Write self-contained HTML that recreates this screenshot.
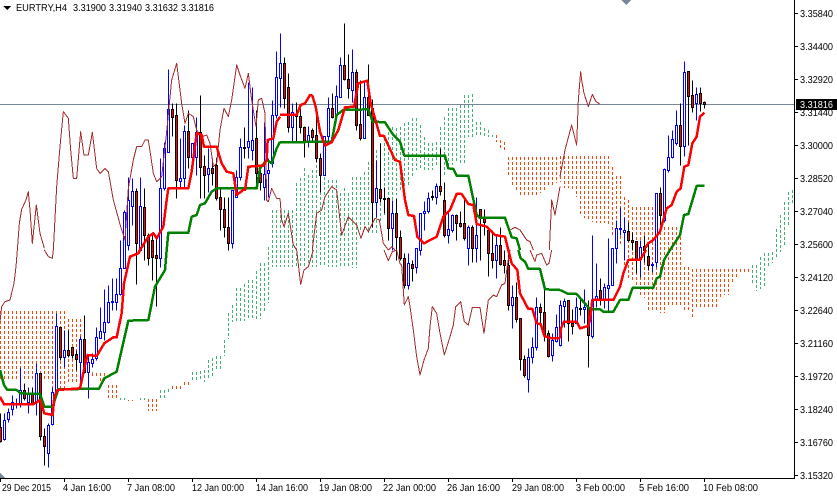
<!DOCTYPE html>
<html><head><meta charset="utf-8"><style>
html,body{margin:0;padding:0;background:#fff}
svg{display:block;width:837px;height:497px;font-family:"Liberation Sans",sans-serif;font-size:10px}
</style></head><body>
<svg width="837" height="497" viewBox="0 0 837 497" xmlns="http://www.w3.org/2000/svg" shape-rendering="crispEdges">
<rect width="837" height="497" fill="#fff"/>
<g transform="translate(.5,0)" fill="none" stroke-width="1" stroke-dasharray="3 2">
<path stroke="#ff4500" d="M0 311V381M4 311V381M8 311V381M12 311V381M16 311V381M20 311V381M24 311V381M28 311V381M32 311V381M36 311V381M40 311V381M44 311V381M48 311V381M52 311V390M56 311V390M60 311V390M64 311V390M68 319V383M72 319V383M76 319V383M80 319V383M92 373V378M96 373V378M100 373V382M104 373V382M108 385V398M112 385V398M116 385V398M128 400V401M132 400V401M148 399V411M152 399V411M156 399V411M172 386V390M176 386V390M180 386V390M184 382V385M188 382V385M496 135V142M500 140V148M504 142V150M508 157V177M512 157V185M516 157V190M520 157V197M524 157V197M528 157V197M532 157V197M536 157V197M540 157V193M544 157V190M548 157V186M552 157V186M556 157V183M560 156V182M564 156V188M568 156V188M572 156V190M576 156V197M580 156V215M584 156V218M588 156V219M592 156V222M596 156V223M600 156V223M604 156V223M608 156V224M612 167V235M616 176V240M620 176V245M624 197V270M628 200V280M632 207V282M636 207V285M640 207V297M644 207V298M648 207V311M652 207V312M656 207V312M660 227V313M664 227V313M668 227V307M672 227V307M676 227V307M680 227V307M684 267V312M688 267V312M692 269V318M696 269V307M700 269V307M704 269V307M708 269V307M712 269V307M716 269V307M720 269V297M724 269V295M728 269V295M732 269V283M736 269V278M740 269V272M744 269V272M748 269V272"/>
<path stroke="#3cb371" d="M92 372V373M120 398V400M124 398V400M140 398V400M144 398V400M160 390V398M164 390V398M168 389V392M192 372V382M196 372V381M200 371V381M204 370V382M208 360V378M212 358V377M216 356V370M220 356V369M224 340V356M228 313V339M232 305V322M236 288V321M240 288V321M244 284V321M248 280V319M252 280V319M256 271V321M260 263V319M264 263V312M268 247V303M272 210V267M276 210V267M280 210V267M284 210V267M288 210V267M292 210V267M296 183V267M300 178V267M304 168V267M308 175V267M312 170V267M316 165V267M320 177V267M324 177V267M328 180V267M332 180V267M336 180V267M340 193V267M344 188V267M348 193V267M352 177V268M356 177V268M360 177V230M364 172V230M368 162V233M372 145V233M376 150V233M380 143V222M384 138V215M388 132V200M392 127V200M396 128V195M400 127V192M404 123V187M408 122V187M412 118V177M416 118V170M420 125V170M424 137V170M428 143V170M432 143V170M436 142V165M440 127V175M444 117V175M448 108V167M452 108V165M456 108V163M460 105V163M464 95V163M468 95V137M472 94V137M476 122V137M480 122V137M484 128V137M488 130V137M492 135V137M752 265V285M756 265V291M760 257V289M764 253V287M768 253V268M772 252V263M776 229V259M780 215V252M784 202V245M788 192V227M792 190V205"/>
</g>
<line x1="0" y1="104.5" x2="794" y2="104.5" stroke="#778899"/>
<g transform="translate(.5,.5)" fill="none" stroke-width="1">
<path stroke="#000" d="M0 413V442M24 383V400M32 387V404M40 373V440M44 428V465M60 327V360M68 330V357M72 347V358M76 350V370M84 315V373M136 188V284M144 188V260M148 233V265M152 233V280M156 238V306M172 103V136M176 103V198M188 110V168M200 95V198M204 155V198M212 158V185M216 157V200M220 188V230M224 197V237M228 197V250M244 127V158M256 110V183M260 168V190M284 57V108M288 73V132M296 102V142M300 108V133M304 126V157M312 128V142M316 115V162M320 153V192M332 93V118M344 23V80M348 54V98M356 69V130M360 80V140M368 64V115M372 99V227M380 143V202M384 187V213M388 198V240M396 198V260M400 230V260M404 253V288M412 260V281M432 190V200M440 148V195M444 182V237M456 214V240M460 211V227M464 198V240M472 225V262M480 209V260M484 209V235M488 230V276M492 230V268M500 227V265M504 250V273M508 250V310M516 282V322M520 318V370M524 355V377M540 303V322M544 282V341M548 330V357M568 300V341M572 309V334M580 297V315M588 300V367M600 278V305M628 222V241M632 232V250M636 241V273M644 235V262M648 242V270M660 187V225M680 103V165M688 71V145M692 80V112M700 87V111M704 101V108"/>
<path stroke="#0000ff" d="M4 413V440M8 408V422M12 395V415M16 398V408M20 367V407M28 387V413M36 363V415M48 423V467M52 387V425M56 313V393M64 330V367M80 336V380M88 355V398M92 353V367M96 327V360M100 307V338M104 289V340M108 285V323M112 278V310M116 278V310M120 240V295M124 210V268M128 177V250M132 178V225M140 177V250M160 158V267M164 142V190M168 69V152M180 138V188M184 125V188M192 143V168M196 117V175M208 148V192M232 190V248M236 170V197M240 138V180M248 82V158M252 87V160M264 122V200M268 158V197M272 100V167M276 51V118M280 33V107M292 103V142M308 126V147M324 136V175M328 97V142M336 85V115M340 57V97M352 49V102M364 80V138M376 160V217M392 200V250M408 253V289M416 248V273M420 213V255M424 201V230M428 192V213M436 183V204M448 212V243M452 214V232M468 225V265M476 197V262M496 235V278M512 285V328M528 348V392M532 337V363M536 297V350M552 333V361M556 314V342M560 300V346M564 298V327M576 297V323M584 289V323M592 235V338M596 263V307M604 283V308M608 238V312M612 248V285M616 220V263M620 207V235M624 217V260M640 240V277M652 262V272M656 193V267M664 168V222M668 135V172M672 130V158M676 110V145M684 61V156M696 87V120"/>
<path stroke="#0000ff" fill="#fff" d="M3 420h2V439h-2zM7 412h2V419h-2zM11 402h2V409h-2zM15 403h2V404h-2zM19 390h2V403h-2zM27 393h2V402h-2zM35 373h2V402h-2zM47 425h2V453h-2zM51 392h2V424h-2zM55 326h2V392h-2zM63 350h2V357h-2zM79 339h2V362h-2zM87 362h2V372h-2zM91 359h2V363h-2zM95 337h2V358h-2zM99 331h2V338h-2zM103 322h2V332h-2zM107 302h2V322h-2zM111 301h2V302h-2zM115 294h2V302h-2zM119 268h2V294h-2zM123 212h2V268h-2zM127 200h2V245h-2zM131 191h2V206h-2zM139 206h2V250h-2zM159 188h2V258h-2zM163 148h2V188h-2zM167 109h2V152h-2zM179 178h2V181h-2zM183 131h2V178h-2zM191 143h2V157h-2zM195 132h2V157h-2zM207 168h2V174h-2zM231 190h2V243h-2zM235 177h2V197h-2zM239 147h2V177h-2zM247 141h2V147h-2zM251 140h2V150h-2zM263 174h2V187h-2zM267 170h2V173h-2zM271 115h2V163h-2zM275 77h2V115h-2zM279 63h2V78h-2zM291 112h2V127h-2zM307 135h2V142h-2zM323 136h2V175h-2zM327 108h2V136h-2zM335 96h2V115h-2zM339 65h2V97h-2zM351 72h2V90h-2zM363 97h2V138h-2zM375 188h2V202h-2zM391 213h2V228h-2zM407 263h2V285h-2zM415 248h2V267h-2zM419 213h2V250h-2zM423 211h2V213h-2zM427 198h2V211h-2zM435 186h2V197h-2zM447 229h2V235h-2zM451 215h2V230h-2zM467 227h2V248h-2zM475 235h2V248h-2zM495 245h2V260h-2zM511 297h2V305h-2zM527 357h2V379h-2zM531 347h2V357h-2zM535 307h2V347h-2zM551 340h2V355h-2zM555 327h2V341h-2zM559 305h2V345h-2zM563 301h2V306h-2zM575 307h2V323h-2zM583 307h2V309h-2zM591 300h2V336h-2zM595 296h2V300h-2zM603 287h2V300h-2zM607 285h2V288h-2zM611 248h2V285h-2zM615 228h2V248h-2zM619 228h2V229h-2zM623 230h2V232h-2zM639 247h2V259h-2zM651 264h2V265h-2zM655 193h2V262h-2zM663 169h2V220h-2zM667 157h2V170h-2zM671 139h2V157h-2zM675 125h2V143h-2zM683 72h2V146h-2zM695 94h2V103h-2z"/>
<path stroke="#000" fill="#ff0000" d="M-1 427h2V441h-2zM23 390h2V398h-2zM31 394h2V403h-2zM39 373h2V436h-2zM43 436h2V446h-2zM59 327h2V357h-2zM67 350h2V355h-2zM71 347h2V355h-2zM75 354h2V359h-2zM83 339h2V372h-2zM135 191h2V243h-2zM143 207h2V235h-2zM147 235h2V258h-2zM151 240h2V257h-2zM155 255h2V258h-2zM171 109h2V117h-2zM175 115h2V180h-2zM187 131h2V157h-2zM199 132h2V167h-2zM203 166h2V175h-2zM211 168h2V173h-2zM215 165h2V198h-2zM219 197h2V209h-2zM223 209h2V227h-2zM227 227h2V243h-2zM243 147h2V148h-2zM255 138h2V173h-2zM259 173h2V182h-2zM283 63h2V98h-2zM287 87h2V127h-2zM295 114h2V116h-2zM299 116h2V127h-2zM303 127h2V142h-2zM311 130h2V137h-2zM315 135h2V158h-2zM319 158h2V175h-2zM331 108h2V117h-2zM343 65h2V79h-2zM347 79h2V88h-2zM355 72h2V125h-2zM359 124h2V138h-2zM367 97h2V115h-2zM371 108h2V202h-2zM379 189h2V198h-2zM383 198h2V199h-2zM387 198h2V228h-2zM395 213h2V237h-2zM399 237h2V258h-2zM403 258h2V285h-2zM411 264h2V268h-2zM431 196h2V197h-2zM439 186h2V191h-2zM443 200h2V235h-2zM455 215h2V223h-2zM459 223h2V226h-2zM463 223h2V238h-2zM471 227h2V248h-2zM479 209h2V218h-2zM483 218h2V222h-2zM487 230h2V253h-2zM491 253h2V260h-2zM499 245h2V264h-2zM503 260h2V265h-2zM507 265h2V305h-2zM515 297h2V319h-2zM519 318h2V359h-2zM523 359h2V375h-2zM539 307h2V312h-2zM543 312h2V335h-2zM547 333h2V356h-2zM567 300h2V323h-2zM571 323h2V326h-2zM579 308h2V309h-2zM587 308h2V335h-2zM599 290h2V298h-2zM627 231h2V240h-2zM631 240h2V242h-2zM635 241h2V260h-2zM643 246h2V250h-2zM647 256h2V265h-2zM659 193h2V215h-2zM679 125h2V146h-2zM687 71h2V96h-2zM691 95h2V107h-2zM699 93h2V103h-2zM703 102h2V104h-2z"/>
</g>
<g fill="none" stroke-linejoin="round">
<g stroke="#a52a2a" stroke-width="3">
<g transform="translate(0,250) scale(.33333)"><polyline points="0,215 5,170 15,155 30,150 42,100 48,50 52,0"/><polyline points="133,0 145,20 157,25 160,0"/></g>
<g transform="scale(.33333)"><polyline points="52,750 58,670 65,628 78,600 85,575 90,630 97,730 109,615 120,700 133,745"/><polyline points="160,750 170,560 180,440 190,335 205,355 212,450 220,535 230,535 242,395 252,465 265,465 277,397 290,505 300,520 315,505 325,515 340,600 362,680 375,720 385,565 400,480 410,440 425,440 435,420 445,420 460,520 470,545 485,530 500,395 515,240 530,190 545,310 555,370 565,340 580,350 590,390 605,410 620,405 630,430 640,500 650,490 660,390 672,325 685,350 695,300 710,195 720,225 735,265 745,220 755,300 768,380 775,300 785,295 795,340 800,600 805,605 815,565 830,595 840,595"/></g>
<g transform="translate(280,0) scale(.33333)"><polyline points="0,595 5,660 12,680 25,640 40,735 50,750"/><polyline points="97,750 110,640 125,630 135,590 155,560 170,570 185,705 205,650 230,675 243,715 255,680 265,695 285,655 298,660 310,730 325,750"/><polyline points="325,750 335,740 345,750"/><polyline points="690,690 705,682 720,690 740,720 750,725 760,750"/><polyline points="808,750 815,600 825,645 840,560"/></g>
<g transform="translate(280,250) scale(.33333)"><polyline points="50,0 62,103 72,60 85,50 97,10 100,0"/><polyline points="312,0 325,32 337,5 350,0 360,40 365,45 373,165 385,140 390,170 400,240 410,320 420,375 432,330 445,295 450,230 457,170 470,190 480,250 493,315 510,260 520,225 527,170 542,155 553,215 565,225 577,172 600,172 612,250 625,150 640,135 650,140 665,105 675,100 683,40 690,0"/><polyline points="750,0 765,35 770,15 785,10 800,45 807,40 815,0"/></g>
<g transform="translate(560,0) scale(.33333)"><polyline points="0,530 15,450 35,375 50,435 55,300 62,215 65,240 72,280 85,320 97,283 108,305 120,312"/></g>
</g>
<g stroke="#008000" stroke-width="7.5">
<g transform="translate(0,250) scale(.33333)"><polyline points="0,360 12,405 22,420 50,420 62,430 120,432 133,470 158,470 175,418 297,416 313,385 350,365 385,212 445,210 465,110 495,60 500,0"/></g>
<g transform="scale(.33333)"><polyline points="500,750 505,698 565,698 575,650 590,645 600,615 615,610 635,575 650,565 770,565 780,505 800,480 815,490 830,445 840,425"/></g>
<g transform="translate(280,0) scale(.33333)"><polyline points="0,427 155,425 170,345 190,330 265,328 278,365 315,367 340,405 360,425 373,467 495,467 505,505 520,507 530,527 565,527 590,645 600,653 675,653 695,712 710,715 720,750"/></g>
<g transform="translate(280,250) scale(.33333)"><polyline points="715,0 722,25 735,35 745,57 780,57 795,118 840,120"/></g>
<g transform="translate(560,250) scale(.33333)"><polyline points="0,120 25,132 50,132 90,178 120,178 130,185 160,185 180,150 205,150 218,113 280,113 290,85 300,80 312,30 330,0"/></g>
<g transform="translate(560,0) scale(.33333)"><polyline points="330,750 360,705 372,645 385,642 410,558 433,558"/></g>
</g>
<g stroke="#ff0000" stroke-width="7.5">
<g transform="translate(0,250) scale(.33333)"><polyline points="0,440 12,463 100,463 120,450 133,490 158,495 163,440 172,420 240,415 255,345 263,315 290,318 313,280 340,262 350,262 365,190 372,100 390,20 415,10 420,0"/></g>
<g transform="scale(.33333)"><polyline points="420,750 445,710 460,700 470,715 490,680 500,600 505,565 565,565 575,515 590,400 605,405 612,440 650,440 665,490 680,515 700,520 710,585 730,570 735,570 745,500 790,497 800,480 803,420 820,415 830,365 840,350"/></g>
<g transform="translate(280,0) scale(.33333)"><polyline points="0,345 50,345 62,315 75,310 90,285 97,287 107,320 120,395 135,437 155,427 175,390 195,322 222,320 235,250 262,242 272,310 300,408 312,408 345,480 360,485 375,600 385,645 402,648 412,710 432,730 470,710 490,650 510,630 530,582 545,582 565,612 580,615 590,672 620,680 645,705 675,710 685,750"/></g>
<g transform="translate(280,250) scale(.33333)"><polyline points="685,0 695,40 712,60 720,130 745,177 757,177 770,220 782,222 793,258 815,265 840,265"/></g>
<g transform="translate(560,250) scale(.33333)"><polyline points="0,265 3,235 12,215 50,215 60,235 85,228 90,210 97,150 160,150 180,110 190,70 205,30 240,30 258,0"/></g>
<g transform="translate(560,0) scale(.33333)"><polyline points="255,745 265,730 280,720 300,695 320,625 335,615 350,575 362,565 373,500 385,495 397,430 410,410 420,350 433,338"/></g>
</g>
</g>
<path d="M794.5 0V478.5H0" fill="none" stroke="#000"/>
<path stroke="#000" fill="none" d="M795 13.5h3M795 46.5h3M795 79.5h3M795 112.5h3M795 145.5h3M795 178.5h3M795 211.5h3M795 244.5h3M795 277.5h3M795 310.5h3M795 343.5h3M795 376.5h3M795 409.5h3M795 442.5h3M795 475.5h3M0.5 479v3M64.5 479v3M128.5 479v3M192.5 479v3M256.5 479v3M320.5 479v3M384.5 479v3M448.5 479v3M512.5 479v3M576.5 479v3M640.5 479v3M704.5 479v3"/>
<path fill="#778899" d="M621 0h10l-5 5zM0 473l5 5H0z"/>
<path fill="#000" d="M3 6h8l-4 4z"/>
<g fill="#000" text-rendering="geometricPrecision">
<text x="16" y="11" textLength="51" lengthAdjust="spacingAndGlyphs">EURTRY,H4</text>
<text x="73" y="11" textLength="33" lengthAdjust="spacingAndGlyphs">3.31900</text>
<text x="109" y="11" textLength="33" lengthAdjust="spacingAndGlyphs">3.31940</text>
<text x="145" y="11" textLength="33" lengthAdjust="spacingAndGlyphs">3.31632</text>
<text x="181" y="11" textLength="33" lengthAdjust="spacingAndGlyphs">3.31816</text>
<text x="800" y="17" textLength="33" lengthAdjust="spacingAndGlyphs">3.35840</text>
<text x="800" y="50" textLength="33" lengthAdjust="spacingAndGlyphs">3.34400</text>
<text x="800" y="83" textLength="33" lengthAdjust="spacingAndGlyphs">3.32920</text>
<text x="800" y="116" textLength="33" lengthAdjust="spacingAndGlyphs">3.31440</text>
<text x="800" y="149" textLength="33" lengthAdjust="spacingAndGlyphs">3.30000</text>
<text x="800" y="182" textLength="33" lengthAdjust="spacingAndGlyphs">3.28520</text>
<text x="800" y="215" textLength="33" lengthAdjust="spacingAndGlyphs">3.27040</text>
<text x="800" y="248" textLength="33" lengthAdjust="spacingAndGlyphs">3.25600</text>
<text x="800" y="281" textLength="33" lengthAdjust="spacingAndGlyphs">3.24120</text>
<text x="800" y="314" textLength="33" lengthAdjust="spacingAndGlyphs">3.22640</text>
<text x="800" y="347" textLength="33" lengthAdjust="spacingAndGlyphs">3.21160</text>
<text x="800" y="380" textLength="33" lengthAdjust="spacingAndGlyphs">3.19720</text>
<text x="800" y="413" textLength="33" lengthAdjust="spacingAndGlyphs">3.18240</text>
<text x="800" y="446" textLength="33" lengthAdjust="spacingAndGlyphs">3.16760</text>
<text x="800" y="479" textLength="33" lengthAdjust="spacingAndGlyphs">3.15320</text>
<text x="2" y="491" textLength="49" lengthAdjust="spacingAndGlyphs">29 Dec 2015</text>
<text x="63" y="491" textLength="48" lengthAdjust="spacingAndGlyphs">4 Jan 16:00</text>
<text x="127" y="491" textLength="48" lengthAdjust="spacingAndGlyphs">7 Jan 08:00</text>
<text x="192" y="491" textLength="52" lengthAdjust="spacingAndGlyphs">12 Jan 00:00</text>
<text x="256" y="491" textLength="52" lengthAdjust="spacingAndGlyphs">14 Jan 16:00</text>
<text x="319" y="491" textLength="53" lengthAdjust="spacingAndGlyphs">19 Jan 08:00</text>
<text x="383" y="491" textLength="53" lengthAdjust="spacingAndGlyphs">22 Jan 00:00</text>
<text x="447" y="491" textLength="53" lengthAdjust="spacingAndGlyphs">26 Jan 16:00</text>
<text x="512" y="491" textLength="52" lengthAdjust="spacingAndGlyphs">29 Jan 08:00</text>
<text x="576" y="491" textLength="49" lengthAdjust="spacingAndGlyphs">3 Feb 00:00</text>
<text x="639" y="491" textLength="50" lengthAdjust="spacingAndGlyphs">5 Feb 16:00</text>
<text x="703" y="491" textLength="55" lengthAdjust="spacingAndGlyphs">10 Feb 08:00</text>
</g>
<rect x="796" y="99" width="41" height="11" fill="#000"/>
<text x="800" y="108" textLength="33" lengthAdjust="spacingAndGlyphs" fill="#fff">3.31816</text>
</svg>
</body></html>
